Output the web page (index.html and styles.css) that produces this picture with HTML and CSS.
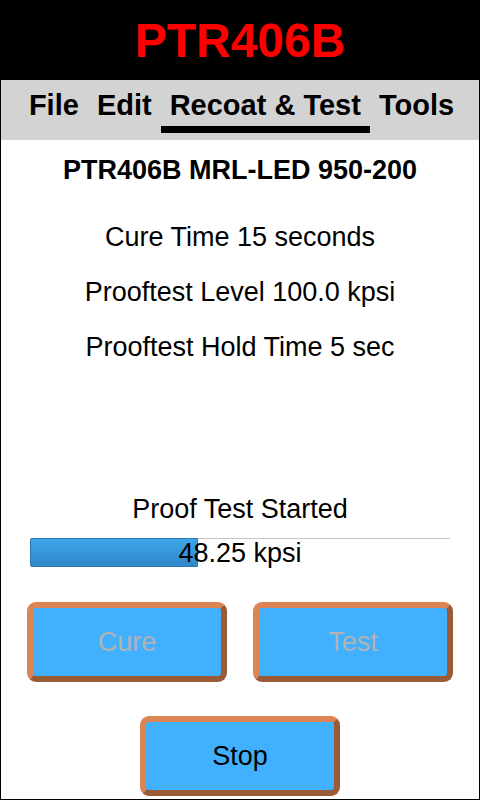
FILE: index.html
```html
<!DOCTYPE html>
<html lang="en">
<head>
    <meta charset="UTF-8">
    <meta name="viewport" content="width=device-width, initial-scale=1.0">
    <title>PTR406B</title>
    <link rel="stylesheet" href="styles.css">
</head>
<body>
    <div class="screen">
        <!-- Header -->
        <header class="title-bar">
            <h1>PTR406B</h1>
        </header>

        <!-- Menu -->
        <nav class="menu">
            <a href="#">File</a>
            <a href="#">Edit</a>
            <a href="#" class="active">Recoat &amp; Test</a>
            <a href="#">Tools</a>
        </nav>

        <!-- Recipe -->
        <main class="content">
            <h2 class="recipe">PTR406B MRL-LED 950-200</h2>
            <div class="params">
                <p>Cure Time 15 seconds</p>
                <p>Prooftest Level 100.0 kpsi</p>
                <p>Prooftest Hold Time 5 sec</p>
            </div>

            <p class="status">Proof Test Started</p>
            <div class="progress">
                <div class="progress-fill" style="width: 40%"></div>
                <span class="progress-label">48.25 kpsi</span>
            </div>

            <div class="button-row">
                <button class="btn" disabled>Cure</button>
                <button class="btn" disabled>Test</button>
            </div>
            <div class="button-row">
                <button class="btn">Stop</button>
            </div>
        </main>
    </div>
</body>
</html>
```

FILE: styles.css
```css
* {
    margin: 0;
    padding: 0;
    box-sizing: border-box;
    font-family: "Liberation Sans", Arial, sans-serif;
}
body {
    background-color: #fff;
}
.screen {
    width: 480px;
    height: 800px;
    border: 1px solid #000;
    border-top: none;
    display: flex;
    flex-direction: column;
    overflow: hidden;
}
/* Header */
.title-bar {
    background-color: #000;
    height: 80px;
    margin: 0 -1px;
    display: flex;
    align-items: center;
    justify-content: center;
}
.title-bar h1 {
    color: #ff0000;
    font-size: 48px;
    font-weight: bold;
    line-height: 1;
    margin-top: 2px;
}
/* Menu */
.menu {
    background-color: #d3d3d3;
    height: 60px;
    padding-top: 10px;
    padding-left: 3px;
    display: flex;
    justify-content: center;
}
.menu a {
    color: #000;
    text-decoration: none;
    font-size: 29px;
    font-weight: bold;
    line-height: 30px;
    padding: 0 9px 6px;
    height: 43px;
    border-bottom: 7px solid transparent;
}
.menu a.active {
    border-bottom-color: #000;
}
/* Content */
.content {
    display: flex;
    flex-direction: column;
    align-items: center;
    padding-top: 15px;
}
.recipe {
    font-size: 27px;
    font-weight: bold;
    line-height: 30px;
}
.params {
    margin-top: 25px;
    text-align: center;
}
.params p {
    font-size: 27px;
    line-height: 55px;
}
.status {
    margin-top: 119px;
    font-size: 27px;
    line-height: 30px;
}
/* Progress */
.progress {
    position: relative;
    width: 420px;
    height: 29px;
    margin-top: 14px;
    border-top: 1px solid #c4c4c4;
    display: flex;
    align-items: center;
    justify-content: center;
}
.progress-fill {
    position: absolute;
    top: -1px;
    left: 0;
    bottom: 0;
    background: linear-gradient(#3ea6ea, #2f88c9);
    border: 1px solid #3079b0;
    border-radius: 2px 0 0 2px;
}
.progress-label {
    position: relative;
    font-size: 27px;
    line-height: 29px;
    color: #000;
}
/* Buttons */
.button-row {
    display: flex;
    justify-content: center;
    gap: 26px;
    margin-top: 35px;
}
.button-row + .button-row {
    margin-top: 34px;
}
.btn {
    width: 200px;
    height: 80px;
    background-color: #41b0ff;
    border: 6px solid;
    border-color: #dc8454 #9b5b37 #9b5b37 #dc8454;
    border-radius: 9px;
    font-size: 27px;
    color: #000;
}
.btn:disabled {
    color: #b2b2b2;
}
```
